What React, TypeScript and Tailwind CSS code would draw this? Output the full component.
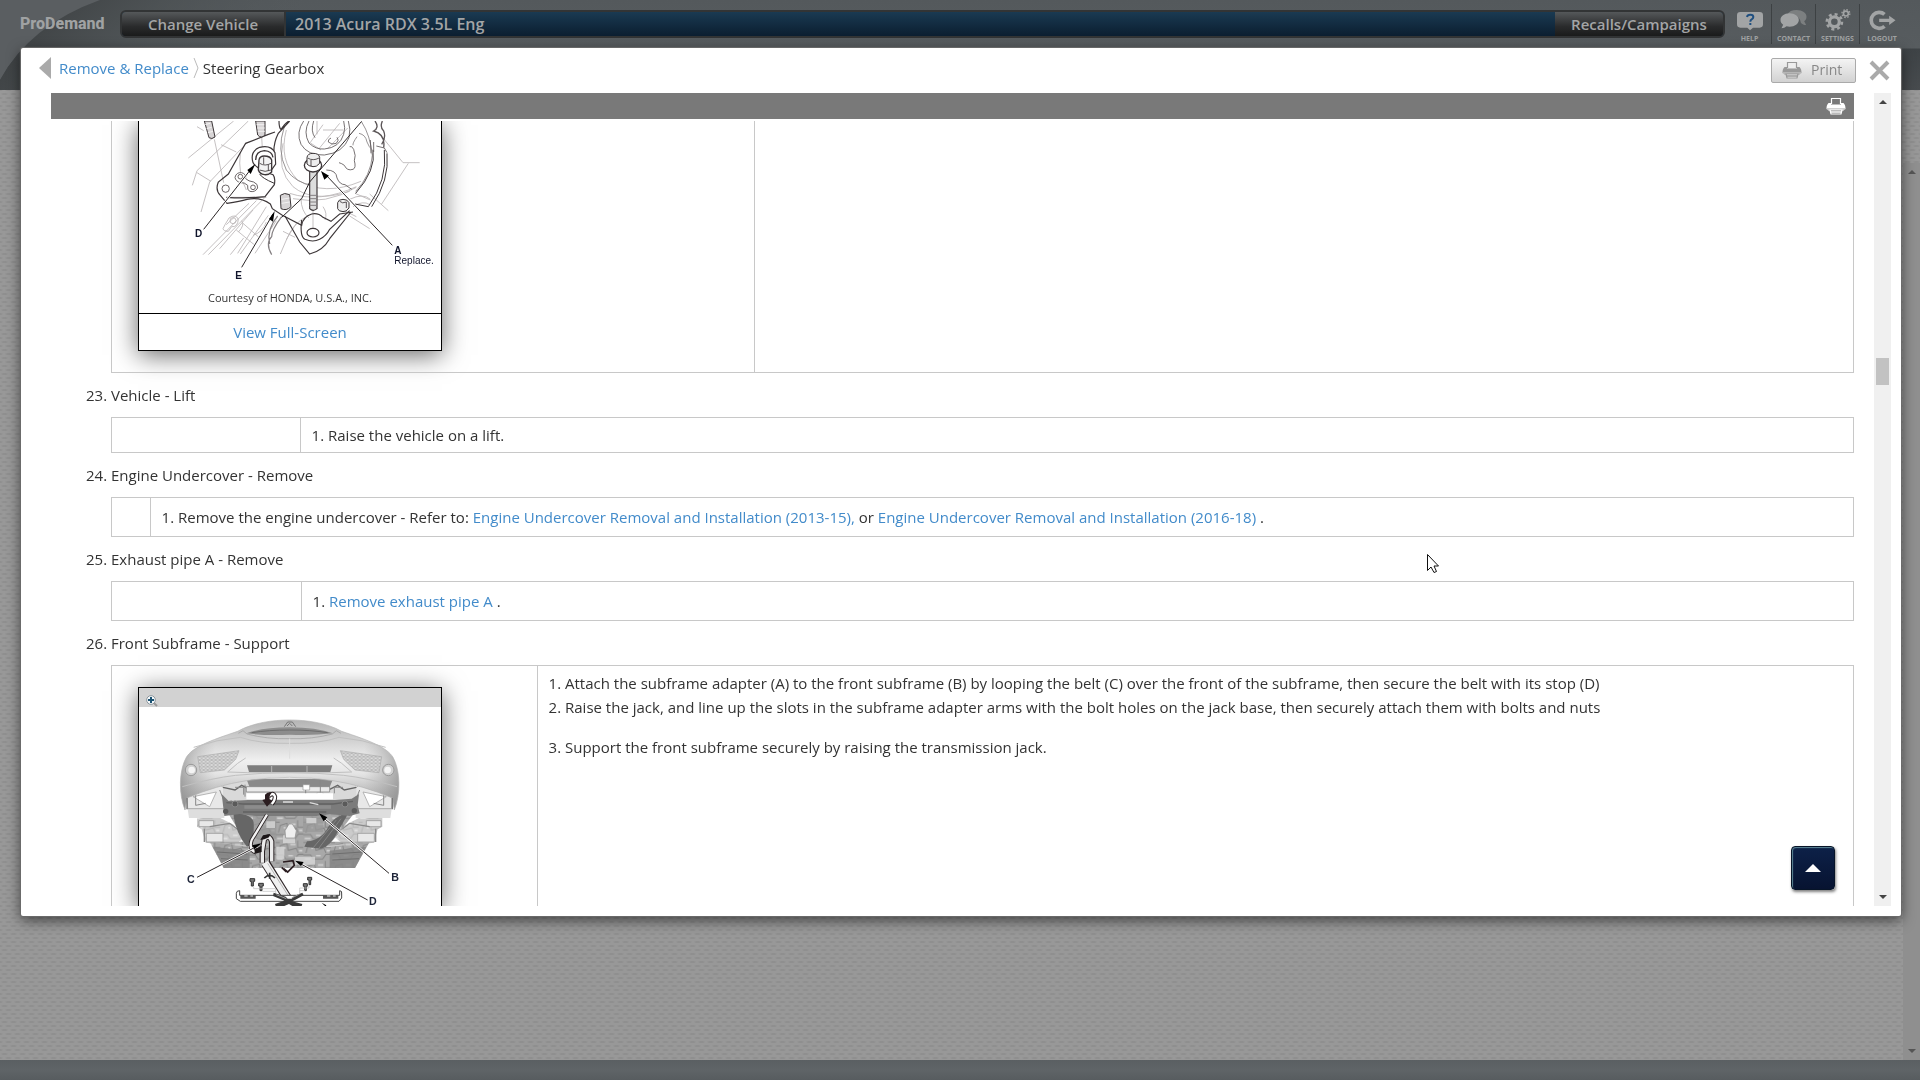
import React from "react";

interface FigureCardProps {
  label: string;
  toolbar?: boolean;
  courtesy?: string;
  openTop?: boolean;
  children: React.ReactNode;
}

const INK = "#3c3638";
const FAINT = "#b9b5b6";

const PrinterIcon = ({ color, paper }: { color: string; paper: string }) => (
  <svg viewBox="0 0 20 18" className="h-[18px] w-5 shrink-0" aria-hidden="true">
    <path d="M5.500 7V1.500h9V7" fill={paper} stroke={color} strokeWidth="1.200" />
    <path
      d="M2.500 6H5v1.500h10V6h2.500c1.500 1.500 2 3 2 6l-2 1.500h-15l-2-1.500C.5 9 1 7.500 2.500 6z"
      fill={color}
    />
    <path d="M1 12h18" stroke={paper} strokeWidth="0.700" />
    <path d="M4 13h12l-1 4H5z" fill={paper} stroke={color} strokeWidth="1.200" />
    <path d="M5 15h10" stroke={color} strokeWidth="1.500" />
  </svg>
);

const HelpIcon = () => (
  <svg viewBox="708 30 78 66" className="h-[22px] w-[26px]" aria-hidden="true">
    <path
      d="M718 39h58q10 0 10 10v27q0 10-10 10h-20l-9 8-8-8h-21q-10 0-10-10V49q0-10 10-10z"
      fill="#a2a4a5"
    />
    <path
      d="M738 54q1-7 10-7 9 0 9 7 0 4-5 7-4 2-4 7"
      fill="none"
      stroke="#1f4f80"
      strokeWidth="6"
    />
    <rect x="745" y="72" width="6" height="6" fill="#1f4f80" />
  </svg>
);

const ContactIcon = () => (
  <svg viewBox="838 30 80 66" className="h-[22px] w-[27px]" aria-hidden="true">
    <path
      d="M860 46c4-9 14-13 27-13 18 0 30 9 30 20 0 6-3 11-7 14l6 11c-7 0-12-3-16-7-2-16-16-26-40-25z"
      fill="#7c7f80"
    />
    <path
      d="M866 43c16 0 28 9 28 20s-12 20-28 20c-3 0-6 0-9-1-4 3-9 6-15 6l5-11c-5-3-8-8-8-14 0-11 11-20 27-20z"
      fill="#a2a4a5"
    />
  </svg>
);

const SettingsIcon = () => (
  <svg viewBox="974 26 78 70" className="h-[23px] w-[26px]" aria-hidden="true">
    <g fill="none" stroke="#a2a4a5">
      <circle cx="1002" cy="68" r="15" strokeWidth="10" />
      <circle cx="1002" cy="68" r="23" strokeWidth="8" strokeDasharray="9 9.060" />
      <circle cx="1037" cy="43" r="7.500" strokeWidth="5" />
      <circle cx="1037" cy="43" r="12" strokeWidth="4" strokeDasharray="4.700 4.720" />
    </g>
  </svg>
);

const LogoutIcon = () => (
  <svg viewBox="1108 28 80 66" className="h-[22px] w-[27px]" aria-hidden="true">
    <path
      d="M1154 44a24 24 0 1 0 0 36"
      fill="none"
      stroke="#a2a4a5"
      strokeWidth="11"
    />
    <path d="M1138 57h30V48l19 14-19 14v-9h-30z" fill="#a2a4a5" />
  </svg>
);

const NAV_ITEMS = [
  { label: "HELP", icon: <HelpIcon /> },
  { label: "CONTACT", icon: <ContactIcon /> },
  { label: "SETTINGS", icon: <SettingsIcon /> },
  { label: "LOGOUT", icon: <LogoutIcon /> },
];

const TransmissionMountDrawing = () => (
  <svg
    viewBox="88 33 906 498"
    className="block h-[166px] w-[302px]"
    role="img"
    aria-label="Transmission mount bolts"
  >
    {/* body panels behind the mount */}
    <g fill="none" stroke={FAINT} strokeWidth="2.500">
      <path d="M262 50l20 12M372 33L236 144M416 33L262 182M412 98L300 216l-26 90M262 188l42 26M334 104l46 22M248 226l14-44" />
      <path d="M820 84l60 74h50M896 160l-80 122M780 252l56 50M720 318l60 38M736 250l46 20M700 300l40 20" />
      <path d="M464 264L296 434M440 272L280 434M418 280L350 344M470 290L384 430M430 300L330 416M500 332L436 430M476 316L392 432M380 360l56 46M400 340l50 44M386 366q20-20 10-34M430 376q30-10 40-40M362 434l40-50M520 364l36 18M560 340q-30 40-48 92M590 320q-40 20-60 70" />
      <path d="M346 344l12-20q20-14 28 4-2 24-20 22l-10 14q-14 0-16-8z" />
      <circle cx="370" cy="332" r="9" />
      <path d="M314 88l28 130M456 80l4 70M610 300v60M392 130q-8 60 18 110M360 262h110" />
      <path d="M520 100q-20 80 30 130 60 50 170 14M530 60q-24 90 34 150 80 50 190 4M540 250q90 30 200-20M550 266q100 20 190-34" />
      <path d="M640 44l-40 56M690 40l-62 76M714 54l-60 62M604 100l30 20M622 33v40M640 60h60" />
      <path d="M574 264q0 40 24 60M640 290q14 20 6 40M720 268q40-20 62 0M730 290q30-20 50-6" />
    </g>
    {/* case rings */}
    <g fill="none" stroke="#5b5557" strokeWidth="2.500">
      <path d="M582 33q-24 34-8 70 20 34 70 32 56-6 74-52 6-26-2-50" />
      <path d="M598 33q-18 34 0 66 20 20 46 18 46-4 58-44 6-20 0-40" />
      <path d="M612 33q-10 30 4 50" />
      <path d="M756 36q26 40 32 100-4 60-50 108M524 50q-24 70 6 130 30 40 80 46" stroke="#837e80" />
      <path d="M796 33q14 20-4 30 36 10 30 50M818 33q-8 20 4 30 8 20-6 40" strokeWidth="4" />
      <path d="M790 120q10 60-52 130M824 120q10 90-48 170l-40-8M832 130q8 80-46 160" stroke={INK} strokeWidth="3" />
      <path d="M782 90l2 40M792 96v30M800 108l24 6 8 14" />
      <path d="M748 70q20 4 24 26 6 16 16 24M742 80q-14 20-12 26" stroke="#837e80" />
      <path d="M720 110q6-4 12 8 8 20 2 34 6 22-4 26-18 6-26-12-8-6-16-8" />
      <path d="M650 180q30 0 32 24 8 20 24 20l20 14" />
      <path d="M664 84q-10 4-8 12 10 10 24 4 10-10 2-18" />
    </g>
    {/* mount bracket */}
    <g fill="none" stroke={INK} strokeWidth="3.500">
      <path d="M496 66l-22 8-66 26-52 92-30 24q-10 24 6 40l20 24q40-6 60-12 40-8 70 14l6 14 30 20 58 30q4-26 30-34 20-4 34 10l24 12 26-22 40-6" />
      <path d="M350 262q60 4 116-2l28-36q4-20-4-30l-40-14M508 33q0 20 6 26 12-20 24-26M540 33L506 70q-20 40-10 80" />
      <path d="M526 318l44 78 30 36q40-10 60-46l64-80M576 330q-6 50 10 58 24 10 44 0 20-10 30-30l60-56" />
      <path d="M516 320q-30 40-30 60-20 20 0 54M504 318q-34 40-24 84" stroke="#837e80" />
    </g>
    <ellipse cx="610" cy="368" rx="18" ry="13" fill="#fff" stroke={INK} strokeWidth="3.500" />
    <g fill="#fff" stroke="#6b6567" strokeWidth="3">
      <circle cx="348" cy="236" r="11" />
      <path d="M376 202q4-16 20-14 14 4 12 18 8 8 24 10 14 6 12 18-8 14-24 10-8-4-6-18-10-10-22-8-14-4-16-16z" />
      <circle cx="392" cy="200" r="7" />
      <circle cx="430" cy="232" r="7" />
    </g>
    {/* bushing */}
    <path d="M430 158q-10-34 20-46 34-8 46 16l2 34-14 20q-40 0-54-24z" fill="#fff" stroke={INK} strokeWidth="3.500" />
    <path d="M438 150q0-26 26-28 24 2 26 20" fill="none" stroke={INK} strokeWidth="4" />
    <path d="M448 150q2-12 16-12 18 0 22 12v36q-10 10-22 8-14-2-18-14z" fill="#f3f3f3" stroke={INK} strokeWidth="4" />
    <path d="M450 160q16 10 34 0M450 180q16 8 34 0M462 142v20M476 164v18" fill="none" stroke={INK} strokeWidth="2.500" />
    <path d="M450 192q6 12 44 28" fill="none" stroke={INK} strokeWidth="3" />
    {/* studs */}
    <g fill="#d8d5d6" stroke={INK} strokeWidth="3">
      <path d="M284 33l14 50q8 6 18-2l-10-48z" />
      <path d="M438 33l6 42q10 12 22 0v-42z" />
      <path d="M512 256q12-10 28-2l4 36q-14 14-30 6z" />
      <path d="M684 278q2-10 16-10 14 0 18 10v16q-8 12-18 11-14-1-16-9z" fill="#eee" />
    </g>
    <path d="M286 44l16-4M290 56l16-4M294 68l16-4M440 44h24M442 54h24M444 64h22M516 268l24-4M516 280l24-4" stroke="#fff" strokeWidth="2" />
    <path d="M690 274q8 8 20 2v18" fill="none" stroke={INK} strokeWidth="2.500" />
    {/* replaceable bolt */}
    <path d="M600 180v116q10 10 22 0V180z" fill="#ddd" stroke={INK} strokeWidth="3.500" />
    <path d="M600 256h22M600 266h22M600 276h22M600 286h22" stroke="#837e80" strokeWidth="3" />
    <ellipse cx="610" cy="166" rx="26" ry="20" fill="#fff" stroke={INK} strokeWidth="4" />
    <path d="M592 142q2-12 18-12 18 0 20 12v18q-10 12-20 10-14-2-18-8z" fill="#eee" stroke={INK} strokeWidth="3" />
    <path d="M594 144q16 10 34 0M604 150v18" fill="none" stroke={INK} strokeWidth="2.500" />
    {/* leader lines */}
    <g stroke="#fff" strokeWidth="7">
      <path d="M282 358L428 172M396 472L490 312M848 406L650 196" />
    </g>
    <g fill="none" stroke="#2b2627" strokeWidth="3">
      <path d="M282 358L428 172M396 472L490 312M848 406L650 196M756 34L600 216 576 266 516 322" />
    </g>
    <path d="M437 162l-24 18 10 12zM495 303l-17 24 12 8zM634 183l10 26 14-12z" fill="#000" />
    <g fontFamily="Liberation Sans, sans-serif" fontSize="30" fill="#10142b">
      <text x="256" y="381" fontWeight="700">D</text>
      <text x="377" y="507" fontWeight="700">E</text>
      <text x="854" y="432" fontWeight="700">A</text>
      <text x="854" y="462">Replace.</text>
    </g>
  </svg>
);

const BUMPER =
  "M226 420C206 370 208 300 230 262C248 232 300 212 384 184C430 158 490 150 540 150C590 150 650 158 696 184C780 212 832 232 850 262C872 300 874 370 854 420L848 384Q760 346 670 332Q540 312 410 332Q320 346 232 384Z";

const SubframeDrawing = () => (
  <svg
    viewBox="88 111 906 597"
    className="block h-[199px] w-[302px]"
    role="img"
    aria-label="Front subframe support"
  >
    <defs>
      <linearGradient id="bumper" x1="0" y1="0" x2="0" y2="1">
        <stop offset="0" stopColor="#b4b4b4" />
        <stop offset="0.200" stopColor="#cecece" />
        <stop offset="0.450" stopColor="#f0f0f0" />
        <stop offset="0.600" stopColor="#e4e4e4" />
        <stop offset="1" stopColor="#949494" />
      </linearGradient>
      <linearGradient id="side" x1="0" y1="0" x2="1" y2="0">
        <stop offset="0" stopColor="#8a8a8a" stopOpacity="0.700" />
        <stop offset="0.160" stopColor="#aaa" stopOpacity="0" />
        <stop offset="0.840" stopColor="#aaa" stopOpacity="0" />
        <stop offset="1" stopColor="#8a8a8a" stopOpacity="0.700" />
      </linearGradient>
      <pattern id="mesh" width="12" height="10" patternUnits="userSpaceOnUse">
        <rect width="12" height="10" fill="#dcdcdc" />
        <path d="M0 5l3-4h6l3 4-3 4H3z" fill="none" stroke="#999" strokeWidth="1.500" />
      </pattern>
      <pattern id="parts" width="83" height="61" patternUnits="userSpaceOnUse">
        <rect width="83" height="61" fill="#a8a8a8" />
        <path
          d="M0 6h22l8 12h28l10-14h15M8 61l6-22 20-6 4 20 24-6 6 14M66 24v20h17M0 30h12"
          fill="none"
          stroke="#868686"
          strokeWidth="3"
        />
        <path d="M4 18h18M38 8h14M44 36h16M70 54h10M24 46h6" stroke="#cfcfcf" strokeWidth="5" />
      </pattern>
    </defs>

    {/* suspension and floor pan */}
    <path d="M300 515L780 515 736 594H342z" fill="url(#parts)" />
    <path d="M310 530l110 12v52h-78zM770 530l-110 12v52h76z" fill="#858585" opacity="0.850" />
    <path d="M322 546l90 6M334 566l80 4M758 546l-90 6M748 566l-80 4" stroke="#6e6e6e" strokeWidth="3" />
    <path d="M300 515l120 14h240l120-14" fill="none" stroke="#c9c9c9" strokeWidth="4" />
    <path d="M262 444h70l40 20 30 40-30 24-84-10-12-40-14-8zM818 444h-70l-40 20-30 40 30 24 84-10 12-40 14-8z" fill="url(#parts)" opacity="0.600" />
    <path d="M268 452h44v18h-44zM770 452h44v18h-44zM290 490h50v26h-50zM744 490h50v26h-50z" fill="#e8e8e8" stroke="#9b9b9b" strokeWidth="2.500" />
    <path d="M300 470l60-10 40 30M780 470l-60-10-40 30M284 476v40M798 476v40" stroke="#8a8a8a" strokeWidth="4" fill="none" />
    <path d="M350 420h390l-60 80-40 40H440l-60-70z" fill="url(#parts)" />
    <path d="M430 436h70v70h-70zM580 436h60v50h-60z" fill="#999" opacity="0.700" />
    <path d="M470 454h26v20h-26zM520 496h36v24h-36zM590 444h30v16h-30zM500 530h24v36h-24zM556 560h60v24h-60z" fill="#d8d8d8" opacity="0.800" />
    <path d="M526 482l12-20h10l12 20-4 22h-28z" fill="#efefef" stroke="#888" strokeWidth="2" />
    <path d="M370 428q60 4 62 30 2 40-8 66l-12 6q-34-40-42-102zM716 430q-40 6-60 40-20 40-64 44l-8 16 50 6q30-8 50-50z" fill="#666" />
    <path d="M610 534l70-84M628 534l66-88" stroke="#858585" strokeWidth="3" />

    {/* splash shields */}
    <path d="M234 416h110v28H238zM846 416H738v28h104z" fill="#dedede" />
    <path d="M232 372l98-30 40 40-20 34H234zM848 372l-98-30-40 40 20 34h116z" fill="#e8e8e8" stroke="#9a9a9a" strokeWidth="2.500" />
    <path d="M250 380l70-14-20 44zM830 380l-70-14 20 44z" fill="#fff" stroke="#a8a8a8" strokeWidth="2.500" />
    <path d="M258 376v30l30-6M822 376v30l-30-6M330 360l20 50M750 360l-20 50" fill="none" stroke="#888" strokeWidth="3" />
    <path d="M340 330h400v60H340z" fill="#d9d9d9" />
    <path d="M340 352l36 8 20-14 24 12M740 352l-36 8-20-14-24 12" fill="none" stroke="#666" strokeWidth="4" />
    <path d="M410 326h260l-10 26H420z" fill="#8a8a8a" />

    {/* bumper cover */}
    <path d={BUMPER} fill="url(#bumper)" />
    <path d={BUMPER} fill="url(#side)" stroke="#b4b4b4" strokeWidth="2" />
    <path d="M410 190q50-18 130-18t130 18q-70 8-130 4-70 4-130-4z" fill="#8d8d8d" />
    <path d="M426 188q50-8 114-8 64 0 114 8" fill="none" stroke="#6c6c6c" strokeWidth="3" />
    <path d="M524 170l10-14h14l10 14M532 168l8-8 8 8" fill="none" stroke="#777" strokeWidth="3" />
    <path d="M386 190l14-8 12 10q60 16 128 14 68 2 128-14l12-10 14 8" fill="none" stroke="#a5a5a5" strokeWidth="2.500" />
    <path d="M252 232q70-24 140-30 60 20 148 18 88 2 148-18 70 6 140 30" fill="none" stroke="#c0c0c0" strokeWidth="3" />
    <path d="M540 206v60" stroke="#ddd" strokeWidth="3" />
    <path d="M264 260l124-18-10 26-34 32-72 8zM816 260l-124-18 10 26 34 32 72 8z" fill="url(#mesh)" stroke="#aaa" strokeWidth="2" />
    <path d="M408 264l-24 16-30 26 60 2h252l60-2-30-26-24-16" fill="none" stroke="#c0c0c0" strokeWidth="3" />
    <path d="M412 286h256l-6 20H418z" fill="#7e7e7e" />
    <path d="M486 288v18M592 288v18" stroke="#b6b6b6" strokeWidth="3" />
    <circle cx="244" cy="300" r="17" fill="#d0d0d0" stroke="#999" strokeWidth="3" />
    <circle cx="246" cy="300" r="10" fill="#f4f4f4" />
    <circle cx="836" cy="300" r="17" fill="#d0d0d0" stroke="#999" strokeWidth="3" />
    <circle cx="834" cy="300" r="10" fill="#f4f4f4" />
    <path d="M218 350q90-26 160-34 80-8 162-8t162 8q70 8 160 34" fill="none" stroke="#c0c0c0" strokeWidth="3" />
    <path d="M232 384v34M848 384v34" stroke="#777" strokeWidth="4" />

    {/* radiator support */}
    <path d="M410 350h250v16H410z" fill="#ebebeb" stroke="#888" strokeWidth="2.500" />
    <path d="M376 352h26v22M700 352h-26v18M588 330v50M632 330v50M406 344v36" fill="none" stroke="#888" strokeWidth="3" />
    <path d="M580 344h20v16h-20zM622 368h18v14h-18z" fill="#fff" stroke="#999" strokeWidth="2" />
    <path d="M410 370h260v18H410z" fill="#fff" />

    {/* front subframe beam */}
    <path d="M336 372l20 20 60 -2h260l50-4 22-14-4 34 6 24-30 8-60-6-40 6H440l-50-6-46 6z" fill="#7b7b7b" />
    <path d="M350 398l50 4h270l60-8M400 426h250" fill="none" stroke="#626262" strokeWidth="4" />
    <path d="M404 406h260v10H404z" fill="#8c8c8c" />
    <path d="M520 396h30M600 398l26 6" stroke="#ddd" strokeWidth="4" />
    <circle cx="376" cy="402" r="9" fill="#5a5a5a" stroke="#888" strokeWidth="3" />
    <circle cx="706" cy="402" r="9" fill="#5a5a5a" stroke="#888" strokeWidth="3" />
    <circle cx="348" cy="424" r="8" fill="#5a5a5a" />
    <circle cx="734" cy="422" r="8" fill="#5a5a5a" />

    {/* belt */}
    <g fill="none" strokeLinejoin="round">
      <path d="M476 380q14-16 20 0 0 12-10 22" stroke="#2b2325" strokeWidth="13" />
      <path d="M476 380q14-16 20 0 0 12-10 22" stroke="#fff" strokeWidth="7" />
      <path d="M472 434l-46 76q-10 30 14 38" stroke="#2b2325" strokeWidth="12" />
      <path d="M472 434l-46 76q-10 30 14 38" stroke="#f4f4f4" strokeWidth="7" />
      <path d="M468 580l66 106" stroke="#2b2325" strokeWidth="28" />
      <path d="M466 578l68 108" stroke="#f0f0f0" strokeWidth="22" />
      <path d="M474 580l66 104" stroke="#999" strokeWidth="2" />
      <path d="M458 578v-34l6-36q14-16 22 6v60" stroke="#2b2325" strokeWidth="16" />
      <path d="M458 578v-34l6-36q14-16 22 6v60" stroke="#ececec" strokeWidth="10" />
    </g>
    <path d="M466 374q10-10 20-6-8 8-6 20l8 4-16 18-14-20 8-2z" fill="#2b1d20" />
    <path d="M436 536l20-8v18l-22 6zM452 510l8-14 22-4-4 10-14 6z" fill="#1c1718" />
    <path d="M520 576l30-4 4 14-20 20-12-10M516 592l14 14" fill="none" stroke="#2b1d20" strokeWidth="5" />
    <path d="M464 624q16-16 32 0M480 608v18" fill="none" stroke="#333" strokeWidth="5" />

    {/* bolts */}
    <g fill="#777" stroke="#333" strokeWidth="3">
      <path d="M421 626h14v8h-4v14h-6v-14h-4zM447 640h14v8h-4v14h-6v-14h-4zM594 622h12v8h-3v14h-5v-14h-4zM581 641h12v8h-3v13h-5v-13h-4z" />
    </g>
    <path d="M432 650v6h66v14M458 664h40M598 646v8h-28v16M586 662h-16" fill="none" stroke="#bbb" strokeWidth="2" />

    {/* adapter arms */}
    <path d="M380 670q0-8 10-8v14h300v-14q8 0 6 10v12l-8 10H392l-12-8z" fill="#fff" stroke="#444" strokeWidth="3" />
    <path d="M392 676h46v10h-46zM640 676h46v10h-46z" fill="#555" />
    <path d="M404 678h10M422 678h8M652 678h10M670 678h8" stroke="#eee" strokeWidth="3" />
    <path d="M492 668l36 12 6 6h12l8-8 24-10 4 8-26 14-8 4 30 8-2 6h-28l-10-6-14 6h-26l-2-6 28-10-34-14z" fill="#3a3a3a" />
    <path d="M500 674l30 12M570 672l-24 12" stroke="#999" strokeWidth="3" />

    {/* leader lines */}
    <g stroke="#fff" strokeWidth="7">
      <path d="M262 622L444 528M838 610L640 442M774 690L570 580" />
    </g>
    <g stroke="#2b2627" strokeWidth="3">
      <path d="M262 622L444 528M838 610L640 442M774 690L570 580" />
    </g>
    <path d="M456 520l-28 6 6 12zM628 430l14 24 11-12zM556 572l18 16 8-12zM636 698l14 8 -2 4z" fill="#000" />
    <g fontFamily="Liberation Sans, sans-serif" fontSize="32" fontWeight="700" fill="#1d2438">
      <text x="232" y="639">C</text>
      <text x="845" y="633">B</text>
      <text x="778" y="704">D</text>
    </g>
  </svg>
);

const ZoomButton = () => (
  <button type="button" aria-label="Zoom in" className="cursor-pointer">
    <svg viewBox="0 0 36 36" className="block h-3 w-3" aria-hidden="true">
      <path d="M22 22l11 11" stroke="#999" strokeWidth="6" />
      <circle cx="15" cy="15" r="13" fill="#f7fafc" stroke="#8d979d" strokeWidth="3" />
      <path d="M15 6v18M6 15h18" stroke="#1b5272" strokeWidth="6" />
    </svg>
  </button>
);

const FigureCard: React.FC<FigureCardProps> = ({
  label,
  toolbar,
  courtesy,
  openTop,
  children,
}) => (
  <figure
    aria-label={label}
    className={`w-[304px] border-x border-b border-black bg-white text-center shadow-[0_4px_24px_rgba(0,0,0,0.6)] ${
      openTop ? "" : "border-t"
    }`}
  >
    {toolbar && (
      <div className="flex h-[19px] items-end bg-[#d2d2d2] pl-[7px]">
        <ZoomButton />
      </div>
    )}
    {children}
    {courtesy && (
      <>
        <figcaption className="h-[27px] border-b border-black text-[11px] leading-[22px]">
          {courtesy}
        </figcaption>
        <a href="#full-screen" className="block h-9 leading-9 text-[#428bca]">
          View Full-Screen
        </a>
      </>
    )}
  </figure>
);

interface StepTableProps {
  leftCell: string;
  children: React.ReactNode;
  figure?: React.ReactNode;
}

const StepTable = ({ leftCell, children, figure }: StepTableProps) => (
  <table className="my-[10px] w-full table-fixed border-collapse border border-[#c8c8c8]">
    <tbody>
      <tr>
        <td className={`border border-[#c8c8c8] p-0 align-top ${leftCell}`}>{figure}</td>
        <td className="p-0 align-top">{children}</td>
      </tr>
    </tbody>
  </table>
);

const Link = ({ children }: { children: React.ReactNode }) => (
  <a href="#article" className="text-[#428bca] hover:underline">
    {children}
  </a>
);

const Header = () => (
  <header className="relative h-[90px] bg-[linear-gradient(#54595c,#575c5f_48px,#3e4346_49px,#474b4e)]">
    <svg className="absolute top-0 left-0 h-[90px] w-[300px]" aria-hidden="true">
      <defs>
        <linearGradient id="swoosh" x1="0" y1="0" x2="1" y2="0.300">
          <stop offset="0" stopColor="#36393b" />
          <stop offset="0.500" stopColor="#4a4f51" stopOpacity="0.700" />
          <stop offset="1" stopColor="#54595c" stopOpacity="0" />
        </linearGradient>
      </defs>
      <path d="M0 0H100Q30 25 0 80z" fill="#5a5e61" />
      <path d="M100 0Q30 25 0 80V90H21V48H300V0z" fill="url(#swoosh)" />
    </svg>
    <div className="relative flex h-12 items-center pr-4 pl-5">
      <span className="w-[100px] shrink-0 font-[Roboto] text-base font-extrabold text-[#a0a2a3]">
        ProDemand
      </span>
      <div className="flex h-[28px] min-w-0 flex-1 overflow-hidden rounded-md border-2 border-[#323435] bg-[linear-gradient(#1a3a52,#0b1e30)] font-semibold text-[#a3a5a6]">
        <button
          type="button"
          className="w-[164px] shrink-0 cursor-pointer border-r-2 border-[#323435] bg-[linear-gradient(#55585a,#2a2b2c_60%,#1a1b1b)]"
        >
          Change Vehicle
        </button>
        <span className="flex-1 truncate pl-[9px] text-base leading-6">
          2013 Acura RDX 3.5L Eng
        </span>
        <button
          type="button"
          className="w-[168px] shrink-0 cursor-pointer bg-[linear-gradient(#55585a,#2a2b2c_60%,#1a1b1b)]"
        >
          Recalls/Campaigns
        </button>
      </div>
      <nav className="ml-[3px] flex h-10 divide-x divide-[#3d4143]">
        {NAV_ITEMS.map((item) => (
          <a
            key={item.label}
            href={`#${item.label.toLowerCase()}`}
            className="flex w-11 flex-col items-center justify-end gap-1 pb-px text-[7px] leading-[8px] font-bold text-[#a0a2a3]"
          >
            {item.icon}
            {item.label}
          </a>
        ))}
      </nav>
    </div>
  </header>
);

const Caret = ({ down, color }: { down?: boolean; color: string }) => (
  <svg
    viewBox="0 0 8 4"
    className={`h-1 w-2 ${down ? "rotate-180" : ""}`}
    aria-hidden="true"
  >
    <path d="M4 0l4 4H0z" fill={color} />
  </svg>
);

const Procedure = () => (
  <ol start={22} className="list-decimal pl-[60px]">
    <li className="list-none">
      <table className="mb-[10px] w-full table-fixed border-collapse border border-t-0 border-[#c8c8c8]">
        <tbody>
          <tr>
            <td className="w-[643px] border-r border-[#c8c8c8] p-0 pb-[21px] pl-[26px] align-top">
              <FigureCard
                label="Transmission mount"
                courtesy="Courtesy of HONDA, U.S.A., INC."
                openTop
              >
                <TransmissionMountDrawing />
              </FigureCard>
            </td>
            <td />
          </tr>
        </tbody>
      </table>
    </li>
    <li>
      Vehicle - Lift
      <StepTable leftCell="w-[189px]">
        <ol className="list-decimal py-[5px] pl-[27px]">
          <li>Raise the vehicle on a lift.</li>
        </ol>
      </StepTable>
    </li>
    <li>
      Engine Undercover - Remove
      <StepTable leftCell="w-[39px]">
        <ol className="list-decimal py-[7px] pl-[27px]">
          <li>
            Remove the engine undercover - Refer to:{" "}
            <Link>Engine Undercover Removal and Installation (2013-15),</Link> or{" "}
            <Link>Engine Undercover Removal and Installation (2016-18)</Link> .
          </li>
        </ol>
      </StepTable>
    </li>
    <li>
      Exhaust pipe A - Remove
      <StepTable leftCell="w-[190px]">
        <ol className="list-decimal py-[7px] pl-[27px]">
          <li>
            <Link>Remove exhaust pipe A</Link> .
          </li>
        </ol>
      </StepTable>
    </li>
    <li>
      Front Subframe - Support
      <StepTable
        leftCell="w-[426px]"
        figure={
          <div className="pt-[21px] pb-[22px] pl-[26px]">
            <FigureCard label="Subframe support" toolbar>
              <SubframeDrawing />
            </FigureCard>
          </div>
        }
      >
        <ol className="list-decimal pt-[5px] pl-[27px]">
          <li>
            Attach the subframe adapter (A) to the front subframe (B) by looping the
            belt (C) over the front of the subframe, then secure the belt with its
            stop (D)
          </li>
          <li>
            Raise the jack, and line up the slots in the subframe adapter arms with
            the bolt holes on the jack base, then securely attach them with bolts and
            nuts
          </li>
          <li className="mt-4">
            Support the front subframe securely by raising the transmission jack.
          </li>
        </ol>
      </StepTable>
    </li>
  </ol>
);

const ArticleModal = () => (
  <div className="fixed inset-0 flex pt-12 pr-[19px] pb-[164px] pl-[21px]">
    <div
      role="dialog"
      aria-label="Steering Gearbox"
      className="flex min-w-0 flex-1 flex-col rounded-xs bg-white pr-[10px] pb-[10px] shadow-[0_0_1px_1px_#6b6b6b,0_4px_14px_rgba(0,0,0,0.6)]"
    >
      <div className="flex h-[45px] shrink-0 items-center pb-[6px] pl-[18px]">
        <button type="button" aria-label="Back" className="cursor-pointer">
          <svg viewBox="0 0 12 22" className="block h-[22px] w-3" aria-hidden="true">
            <path d="M12 0v22L0 11z" fill="#aaa" />
          </svg>
        </button>
        <a href="#remove" className="ml-2 text-[#428bca]">
          Remove &amp; Replace
        </a>
        <svg viewBox="0 0 6 20" className="mx-1 h-5 w-[6px]" aria-hidden="true">
          <path d="M1 0l4 10-4 10" fill="none" stroke="#bbb" />
        </svg>
        <span>Steering Gearbox</span>
        <button
          type="button"
          className="mt-[5px] ml-auto flex h-[25px] w-[85px] cursor-pointer items-center gap-[9px] rounded-xs border border-[#aaa] bg-[linear-gradient(#f4f4f4,#d2d2d2)] pl-[10px] text-sm text-[#888]"
        >
          <PrinterIcon color="#999" paper="#eee" />
          Print
        </button>
        <button type="button" aria-label="Close" className="mt-[5px] mr-px ml-[13px] cursor-pointer">
          <svg viewBox="0 0 21 21" className="block h-[21px] w-[21px]" aria-hidden="true">
            <path d="M2 2l17 17M19 2L2 19" stroke="#aaa" strokeWidth="4" />
          </svg>
        </button>
      </div>

      <div className="flex min-h-0 flex-1 pl-[30px]">
        <div className="flex min-w-0 flex-1 flex-col">
          <div className="flex h-[26px] shrink-0 items-center justify-end bg-[#797979] pr-2">
            <button type="button" aria-label="Print article" className="cursor-pointer">
              <PrinterIcon color="#fff" paper="#797979" />
            </button>
          </div>
          <div className="mt-[2px] min-h-0 flex-1 overflow-hidden">
            <Procedure />
          </div>
        </div>
        {/* Scrollbar */}
        <div className="ml-5 flex w-[17px] flex-col items-center bg-[#f0f0f0] py-[7px]">
          <Caret color="#444" />
          <div className="mt-[254px] h-[27px] w-[13px] bg-[#c2c2c2]" />
          <div className="mt-auto flex">
            <Caret color="#444" down />
          </div>
        </div>
      </div>
    </div>
  </div>
);

const App: React.FC = () => {
  return (
    <div className="flex min-h-screen flex-col bg-[#989898] font-['Open_Sans',sans-serif] text-[15px] leading-6 text-[#333]">
      <Header />
      <div className="flex flex-1 bg-[radial-gradient(ellipse_4px_1px_at_center,#8f8f8f_60%,transparent),radial-gradient(ellipse_4px_1px_at_center,#8f8f8f_60%,transparent)] bg-[length:9px_8px] bg-[position:0_0,4px_4px]">
        <div className="mt-[73px] ml-auto flex w-[17px] flex-col items-center justify-between bg-[#8f8f8f] py-[7px]">
          <Caret color="#555" />
          <Caret color="#555" down />
        </div>
      </div>
      <footer className="h-5 bg-[linear-gradient(#5a5f62,#5f6467_50%,#575c5f)]" />

      <ArticleModal />

      <button
        type="button"
        aria-label="Back to top"
        className="fixed right-[85px] bottom-[190px] flex h-11 w-11 cursor-pointer items-center justify-center rounded-sm border border-[#071428] bg-[linear-gradient(#0d2148,#071331)] shadow-[inset_1px_1px_1px_#5c8796,1px_2px_3px_rgba(0,0,0,0.5)]"
      >
        <svg viewBox="0 0 16 8" className="h-2 w-4" aria-hidden="true">
          <path d="M8 0l8 8H0z" fill="#fff" />
        </svg>
      </button>

      {/* Pointer */}
      <svg
        viewBox="0 0 12 19"
        className="pointer-events-none fixed top-[554px] left-[1427px] h-[19px] w-3"
        aria-hidden="true"
      >
        <path
          d="M.5.5v16l3.500-3.500 3 5.500 2.500-1-2.500-5.500h4.500z"
          fill="#fff"
          stroke="#111"
        />
      </svg>
    </div>
  );
};

export default App;
